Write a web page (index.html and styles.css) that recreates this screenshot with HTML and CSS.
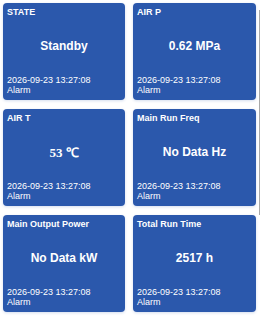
FILE: index.html
```html
<!DOCTYPE html>
<html lang="en">

<head>
    <meta charset="UTF-8">
    <meta name="viewport" content="width=device-width, initial-scale=1.0">
    <title>Device Status</title>
    <link rel="stylesheet" href="styles.css">
</head>

<body>
    <div class="panel">
        <div class="grid">
            <div class="card">
                <div class="title">STATE</div>
                <div class="value">Standby</div>
                <div class="meta">2026-09-23 13:27:08<br>Alarm</div>
            </div>
            <div class="card">
                <div class="title">AIR P</div>
                <div class="value">0.62 MPa</div>
                <div class="meta">2026-09-23 13:27:08<br>Alarm</div>
            </div>
            <div class="card">
                <div class="title">AIR T</div>
                <div class="value serif">53 ℃</div>
                <div class="meta">2026-09-23 13:27:08<br>Alarm</div>
            </div>
            <div class="card">
                <div class="title">Main Run Freq</div>
                <div class="value">No Data Hz</div>
                <div class="meta">2026-09-23 13:27:08<br>Alarm</div>
            </div>
            <div class="card">
                <div class="title">Main Output Power</div>
                <div class="value">No Data kW</div>
                <div class="meta">2026-09-23 13:27:08<br>Alarm</div>
            </div>
            <div class="card">
                <div class="title">Total Run Time</div>
                <div class="value">2517 h</div>
                <div class="meta">2026-09-23 13:27:08<br>Alarm</div>
            </div>
        </div>
        <!-- scrollbar thumb of the list -->
        <div class="thumb"></div>
    </div>
</body>

</html>
```

FILE: styles.css
```css
html, body {
    margin: 0;
    padding: 0;
    background: #fff;
}

body {
    font-family: "Liberation Sans", Arial, sans-serif;
    color: #fff;
}

.panel {
    position: relative;
    width: 261px;
    height: 317px;
    overflow: hidden;
}

.thumb {
    position: absolute;
    left: 259px;
    top: 10px;
    width: 1px;
    height: 205px;
    background: #a8a8a8;
}

.grid {
    display: grid;
    grid-template-columns: 122px 123px;
    column-gap: 8px;
    row-gap: 9px;
    padding: 3px 0 0 3px;
}

.card {
    height: 97px;
    background: #2b58ac;
    border-radius: 4px;
    box-shadow: 0 1px 3px rgba(43, 88, 172, 0.2);
    display: flex;
    flex-direction: column;
    padding: 4px 4px 5px 4px;
    box-sizing: border-box;
}

.title {
    font-size: 9px;
    font-weight: bold;
    line-height: 11px;
}

.value {
    flex: 1;
    display: flex;
    align-items: center;
    justify-content: center;
    font-size: 12px;
    font-weight: bold;
    padding-bottom: 2px;
}

.value.serif {
    font-family: "Liberation Serif", "Times New Roman", serif;
    font-weight: bold;
    font-size: 13px;
}

.meta {
    font-size: 9px;
    line-height: 10px;
}
```
